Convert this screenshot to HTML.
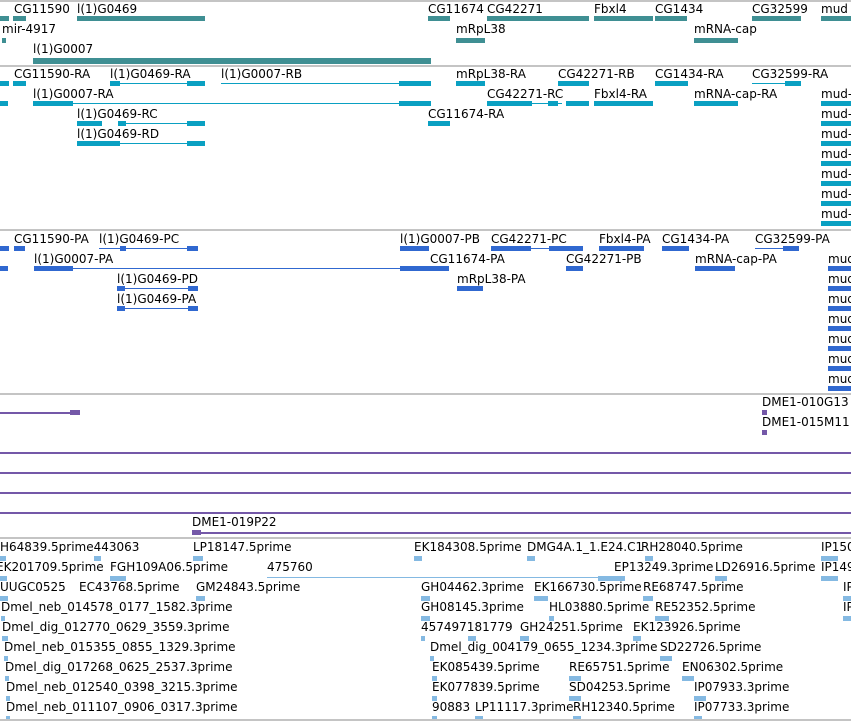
<!DOCTYPE html>
<html><head><meta charset="utf-8"><style>
body{margin:0;width:851px;height:722px;background:#fff;position:relative;overflow:hidden}
.t{position:absolute;font:12px "DejaVu Sans",sans-serif;line-height:14px;white-space:nowrap;color:#000}
.b{position:absolute;height:5px}
.l{position:absolute;height:1px}
.g{position:absolute;left:0;width:851px;height:2px;background:#c4c4c4}
.p{position:absolute;left:0;width:851px;height:2px;background:#7458a8}
.a{background:#3f8f93}.c{background:#0aa0c2}.d{background:#3068d0}.e{background:#7458a8}.f{background:#84b9e2}
</style></head><body>
<div class="g" style="top:0"></div>
<div class="g" style="top:65"></div>
<div class="g" style="top:65px"></div>
<div class="g" style="top:229px"></div>
<div class="g" style="top:393px"></div>
<div class="g" style="top:537px"></div>
<div class="g" style="top:719px"></div>

<!-- track1 -->
<div class="t" style="left:14px;top:2px">CG11590</div>
<div class="t" style="left:77px;top:2px">l(1)G0469</div>
<div class="t" style="left:428px;top:2px">CG11674</div>
<div class="t" style="left:487px;top:2px">CG42271</div>
<div class="t" style="left:594px;top:2px">Fbxl4</div>
<div class="t" style="left:655px;top:2px">CG1434</div>
<div class="t" style="left:752px;top:2px">CG32599</div>
<div class="t" style="left:821px;top:2px">mud</div>
<div class="b a" style="left:0;top:16px;width:9px"></div>
<div class="b a" style="left:13px;top:16px;width:13px"></div>
<div class="b a" style="left:77px;top:16px;width:128px"></div>
<div class="b a" style="left:428px;top:16px;width:22px"></div>
<div class="b a" style="left:487px;top:16px;width:102px"></div>
<div class="b a" style="left:594px;top:16px;width:59px"></div>
<div class="b a" style="left:655px;top:16px;width:32px"></div>
<div class="b a" style="left:752px;top:16px;width:49px"></div>
<div class="b a" style="left:821px;top:16px;width:30px"></div>
<div class="t" style="left:2px;top:22px">mir-4917</div>
<div class="t" style="left:456px;top:22px">mRpL38</div>
<div class="t" style="left:694px;top:22px">mRNA-cap</div>
<div class="b a" style="left:2px;top:38px;width:4px"></div>
<div class="b a" style="left:456px;top:38px;width:29px"></div>
<div class="b a" style="left:694px;top:38px;width:44px"></div>
<div class="t" style="left:33px;top:42px">l(1)G0007</div>
<div class="b a" style="left:33px;top:58px;width:398px;height:6px"></div>

<!-- track2 -->
<div class="t" style="left:14px;top:67px">CG11590-RA</div>
<div class="t" style="left:110px;top:67px">l(1)G0469-RA</div>
<div class="t" style="left:221px;top:67px">l(1)G0007-RB</div>
<div class="t" style="left:456px;top:67px">mRpL38-RA</div>
<div class="t" style="left:558px;top:67px">CG42271-RB</div>
<div class="t" style="left:655px;top:67px">CG1434-RA</div>
<div class="t" style="left:752px;top:67px">CG32599-RA</div>
<div class="b c" style="left:0;top:81px;width:9px"></div>
<div class="b c" style="left:13px;top:81px;width:13px"></div>
<div class="b c" style="left:110px;top:81px;width:10px"></div>
<div class="l c" style="left:120px;top:83px;width:70px"></div>
<div class="b c" style="left:187px;top:81px;width:18px"></div>
<div class="l c" style="left:221px;top:83px;width:180px"></div>
<div class="b c" style="left:399px;top:81px;width:32px"></div>
<div class="b c" style="left:456px;top:81px;width:29px"></div>
<div class="b c" style="left:558px;top:81px;width:31px"></div>
<div class="b c" style="left:655px;top:81px;width:33px"></div>
<div class="l c" style="left:752px;top:83px;width:35px"></div>
<div class="b c" style="left:785px;top:81px;width:16px"></div>
<div class="t" style="left:33px;top:87px">l(1)G0007-RA</div>
<div class="t" style="left:487px;top:87px">CG42271-RC</div>
<div class="t" style="left:594px;top:87px">Fbxl4-RA</div>
<div class="t" style="left:694px;top:87px">mRNA-cap-RA</div>
<div class="b c" style="left:0;top:101px;width:8px"></div>
<div class="b c" style="left:33px;top:101px;width:40px"></div>
<div class="l c" style="left:73px;top:103px;width:328px"></div>
<div class="b c" style="left:399px;top:101px;width:32px"></div>
<div class="b c" style="left:487px;top:101px;width:45px"></div>
<div class="l c" style="left:532px;top:103px;width:30px"></div>
<div class="b c" style="left:548px;top:101px;width:10px"></div>
<div class="b c" style="left:566px;top:101px;width:23px"></div>
<div class="b c" style="left:594px;top:101px;width:59px"></div>
<div class="b c" style="left:694px;top:101px;width:44px"></div>
<div class="t" style="left:77px;top:107px">l(1)G0469-RC</div>
<div class="t" style="left:428px;top:107px">CG11674-RA</div>
<div class="b c" style="left:77px;top:121px;width:25px"></div>
<div class="b c" style="left:118px;top:121px;width:8px"></div>
<div class="l c" style="left:118px;top:123px;width:70px"></div>
<div class="b c" style="left:187px;top:121px;width:18px"></div>
<div class="b c" style="left:428px;top:121px;width:22px"></div>
<div class="t" style="left:77px;top:127px">l(1)G0469-RD</div>
<div class="b c" style="left:77px;top:141px;width:43px"></div>
<div class="l c" style="left:120px;top:143px;width:68px"></div>
<div class="b c" style="left:187px;top:141px;width:18px"></div>
<div class="t" style="left:821px;top:87px">mud-</div><div class="b c" style="left:821px;top:101px;width:30px"></div>
<div class="t" style="left:821px;top:107px">mud-</div><div class="b c" style="left:821px;top:121px;width:30px"></div>
<div class="t" style="left:821px;top:127px">mud-</div><div class="b c" style="left:821px;top:141px;width:30px"></div>
<div class="t" style="left:821px;top:147px">mud-</div><div class="b c" style="left:821px;top:161px;width:30px"></div>
<div class="t" style="left:821px;top:167px">mud-</div><div class="b c" style="left:821px;top:181px;width:30px"></div>
<div class="t" style="left:821px;top:187px">mud-</div><div class="b c" style="left:821px;top:201px;width:30px"></div>
<div class="t" style="left:821px;top:207px">mud-</div><div class="b c" style="left:821px;top:221px;width:30px"></div>

<!-- track3 -->
<div class="t" style="left:14px;top:232px">CG11590-PA</div>
<div class="t" style="left:99px;top:232px">l(1)G0469-PC</div>
<div class="t" style="left:400px;top:232px">l(1)G0007-PB</div>
<div class="t" style="left:491px;top:232px">CG42271-PC</div>
<div class="t" style="left:599px;top:232px">Fbxl4-PA</div>
<div class="t" style="left:662px;top:232px">CG1434-PA</div>
<div class="t" style="left:755px;top:232px">CG32599-PA</div>
<div class="b d" style="left:0;top:246px;width:9px"></div>
<div class="b d" style="left:14px;top:246px;width:11px"></div>
<div class="l d" style="left:99px;top:248px;width:92px"></div>
<div class="b d" style="left:120px;top:246px;width:6px"></div>
<div class="b d" style="left:187px;top:246px;width:11px"></div>
<div class="b d" style="left:400px;top:246px;width:29px"></div>
<div class="b d" style="left:491px;top:246px;width:40px"></div>
<div class="l d" style="left:531px;top:248px;width:30px"></div>
<div class="b d" style="left:549px;top:246px;width:34px"></div>
<div class="b d" style="left:599px;top:246px;width:45px"></div>
<div class="b d" style="left:662px;top:246px;width:27px"></div>
<div class="l d" style="left:755px;top:248px;width:30px"></div>
<div class="b d" style="left:783px;top:246px;width:16px"></div>
<div class="t" style="left:34px;top:252px">l(1)G0007-PA</div>
<div class="t" style="left:430px;top:252px">CG11674-PA</div>
<div class="t" style="left:566px;top:252px">CG42271-PB</div>
<div class="t" style="left:695px;top:252px">mRNA-cap-PA</div>
<div class="b d" style="left:0;top:266px;width:8px"></div>
<div class="b d" style="left:34px;top:266px;width:39px"></div>
<div class="l d" style="left:73px;top:268px;width:328px"></div>
<div class="b d" style="left:400px;top:266px;width:49px"></div>
<div class="b d" style="left:566px;top:266px;width:17px"></div>
<div class="b d" style="left:695px;top:266px;width:40px"></div>
<div class="t" style="left:117px;top:272px">l(1)G0469-PD</div>
<div class="t" style="left:457px;top:272px">mRpL38-PA</div>
<div class="b d" style="left:117px;top:286px;width:8px"></div>
<div class="l d" style="left:117px;top:288px;width:75px"></div>
<div class="b d" style="left:188px;top:286px;width:10px"></div>
<div class="b d" style="left:457px;top:286px;width:26px"></div>
<div class="t" style="left:117px;top:292px">l(1)G0469-PA</div>
<div class="b d" style="left:117px;top:306px;width:8px"></div>
<div class="l d" style="left:117px;top:308px;width:75px"></div>
<div class="b d" style="left:188px;top:306px;width:10px"></div>
<div class="t" style="left:828px;top:252px">mud</div><div class="b d" style="left:828px;top:266px;width:23px"></div>
<div class="t" style="left:828px;top:272px">mud</div><div class="b d" style="left:828px;top:286px;width:23px"></div>
<div class="t" style="left:828px;top:292px">mud</div><div class="b d" style="left:828px;top:306px;width:23px"></div>
<div class="t" style="left:828px;top:312px">mud</div><div class="b d" style="left:828px;top:326px;width:23px"></div>
<div class="t" style="left:828px;top:332px">mud</div><div class="b d" style="left:828px;top:346px;width:23px"></div>
<div class="t" style="left:828px;top:352px">mud</div><div class="b d" style="left:828px;top:366px;width:23px"></div>
<div class="t" style="left:828px;top:372px">mud</div><div class="b d" style="left:828px;top:386px;width:23px"></div>

<!-- track4 -->
<div class="l e" style="left:0;top:412px;width:72px;height:2px"></div>
<div class="b e" style="left:70px;top:410px;width:10px"></div>
<div class="t" style="left:762px;top:395px">DME1-010G13</div>
<div class="b e" style="left:762px;top:410px;width:5px"></div>
<div class="t" style="left:762px;top:415px">DME1-015M11</div>
<div class="b e" style="left:762px;top:430px;width:5px"></div>
<div class="p" style="top:452px"></div>
<div class="p" style="top:472px"></div>
<div class="p" style="top:492px"></div>
<div class="p" style="top:512px"></div>
<div class="t" style="left:192px;top:515px">DME1-019P22</div>
<div class="l e" style="left:195px;top:532px;width:656px;height:2px"></div>
<div class="b e" style="left:192px;top:530px;width:9px"></div>

<!-- track5 -->
<div class="t" style="left:0;top:540px">H64839.5prime443063</div>
<div class="t" style="left:193px;top:540px">LP18147.5prime</div>
<div class="t" style="left:414px;top:540px">EK184308.5prime</div>
<div class="t" style="left:527px;top:540px">DMG4A.1_1.E24.C1</div>
<div class="t" style="left:641px;top:540px">RH28040.5prime</div>
<div class="t" style="left:821px;top:540px">IP150</div>
<div class="b f" style="left:0;top:556px;width:6px"></div>
<div class="b f" style="left:94px;top:556px;width:7px"></div>
<div class="b f" style="left:193px;top:556px;width:10px"></div>
<div class="b f" style="left:414px;top:556px;width:8px"></div>
<div class="b f" style="left:527px;top:556px;width:8px"></div>
<div class="b f" style="left:645px;top:556px;width:8px"></div>
<div class="b f" style="left:821px;top:556px;width:17px"></div>
<div class="t" style="left:-4px;top:560px">EK201709.5prime</div>
<div class="t" style="left:110px;top:560px">FGH109A06.5prime</div>
<div class="t" style="left:267px;top:560px">475760</div>
<div class="t" style="left:614px;top:560px">EP13249.3prime</div>
<div class="t" style="left:715px;top:560px">LD26916.5prime</div>
<div class="t" style="left:821px;top:560px">IP149</div>
<div class="b f" style="left:0;top:576px;width:7px"></div>
<div class="b f" style="left:110px;top:576px;width:16px"></div>
<div class="l f" style="left:267px;top:577px;width:333px"></div>
<div class="b f" style="left:598px;top:576px;width:27px"></div>
<div class="b f" style="left:715px;top:576px;width:12px"></div>
<div class="b f" style="left:821px;top:576px;width:17px"></div>
<div class="t" style="left:0;top:580px">UUGC0525</div>
<div class="t" style="left:79px;top:580px">EC43768.5prime</div>
<div class="t" style="left:196px;top:580px">GM24843.5prime</div>
<div class="t" style="left:421px;top:580px">GH04462.3prime</div>
<div class="t" style="left:534px;top:580px">EK166730.5prime</div>
<div class="t" style="left:643px;top:580px">RE68747.5prime</div>
<div class="t" style="left:843px;top:580px">IP</div>
<div class="b f" style="left:0;top:596px;width:8px"></div>
<div class="b f" style="left:196px;top:596px;width:9px"></div>
<div class="b f" style="left:421px;top:596px;width:9px"></div>
<div class="b f" style="left:534px;top:596px;width:14px"></div>
<div class="b f" style="left:643px;top:596px;width:10px"></div>
<div class="b f" style="left:843px;top:596px;width:8px"></div>
<div class="t" style="left:1px;top:600px">Dmel_neb_014578_0177_1582.3prime</div>
<div class="t" style="left:421px;top:600px">GH08145.3prime</div>
<div class="t" style="left:549px;top:600px">HL03880.5prime</div>
<div class="t" style="left:655px;top:600px">RE52352.5prime</div>
<div class="t" style="left:843px;top:600px">IP</div>
<div class="b f" style="left:1px;top:616px;width:4px"></div>
<div class="b f" style="left:421px;top:616px;width:9px"></div>
<div class="b f" style="left:549px;top:616px;width:5px"></div>
<div class="b f" style="left:655px;top:616px;width:14px"></div>
<div class="b f" style="left:843px;top:616px;width:8px"></div>
<div class="t" style="left:2px;top:620px">Dmel_dig_012770_0629_3559.3prime</div>
<div class="t" style="left:421px;top:620px">457497181779</div>
<div class="t" style="left:520px;top:620px">GH24251.5prime</div>
<div class="t" style="left:633px;top:620px">EK123926.5prime</div>
<div class="b f" style="left:2px;top:636px;width:6px"></div>
<div class="b f" style="left:421px;top:636px;width:4px"></div>
<div class="b f" style="left:468px;top:636px;width:8px"></div>
<div class="b f" style="left:520px;top:636px;width:9px"></div>
<div class="b f" style="left:633px;top:636px;width:8px"></div>
<div class="t" style="left:4px;top:640px">Dmel_neb_015355_0855_1329.3prime</div>
<div class="t" style="left:430px;top:640px">Dmel_dig_004179_0655_1234.3prime</div>
<div class="t" style="left:660px;top:640px">SD22726.5prime</div>
<div class="b f" style="left:4px;top:656px;width:4px"></div>
<div class="b f" style="left:430px;top:656px;width:4px"></div>
<div class="b f" style="left:660px;top:656px;width:12px"></div>
<div class="t" style="left:5px;top:660px">Dmel_dig_017268_0625_2537.3prime</div>
<div class="t" style="left:432px;top:660px">EK085439.5prime</div>
<div class="t" style="left:569px;top:660px">RE65751.5prime</div>
<div class="t" style="left:682px;top:660px">EN06302.5prime</div>
<div class="b f" style="left:5px;top:676px;width:4px"></div>
<div class="b f" style="left:432px;top:676px;width:5px"></div>
<div class="b f" style="left:569px;top:676px;width:12px"></div>
<div class="b f" style="left:682px;top:676px;width:12px"></div>
<div class="t" style="left:6px;top:680px">Dmel_neb_012540_0398_3215.3prime</div>
<div class="t" style="left:432px;top:680px">EK077839.5prime</div>
<div class="t" style="left:569px;top:680px">SD04253.5prime</div>
<div class="t" style="left:694px;top:680px">IP07933.3prime</div>
<div class="b f" style="left:6px;top:696px;width:4px"></div>
<div class="b f" style="left:432px;top:696px;width:5px"></div>
<div class="b f" style="left:569px;top:696px;width:12px"></div>
<div class="b f" style="left:694px;top:696px;width:12px"></div>
<div class="t" style="left:6px;top:700px">Dmel_neb_011107_0906_0317.3prime</div>
<div class="t" style="left:432px;top:700px">90883</div>
<div class="t" style="left:475px;top:700px">LP11117.3prime</div>
<div class="t" style="left:573px;top:700px">RH12340.5prime</div>
<div class="t" style="left:694px;top:700px">IP07733.3prime</div>
<div class="b f" style="left:6px;top:716px;width:4px;height:3px"></div>
<div class="b f" style="left:432px;top:716px;width:5px;height:3px"></div>
<div class="b f" style="left:475px;top:716px;width:8px;height:3px"></div>
<div class="b f" style="left:573px;top:716px;width:8px;height:3px"></div>
<div class="b f" style="left:694px;top:716px;width:8px;height:3px"></div>
</body></html>
